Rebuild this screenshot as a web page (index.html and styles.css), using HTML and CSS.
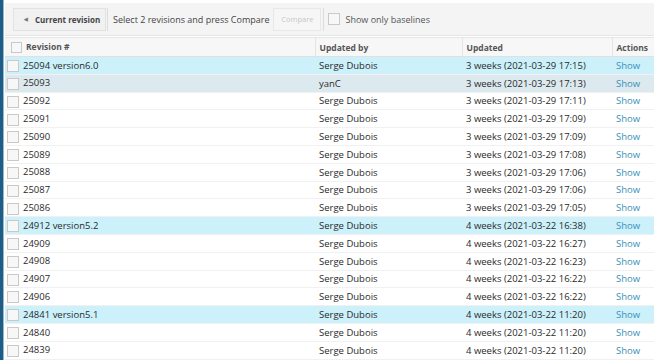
FILE: index.html
```html
<!DOCTYPE html>
<html>
<head>
<meta charset="utf-8">
<link rel="stylesheet" href="styles.css">
</head>
<body>
<div class="page">
  <div class="rail"></div>
  <div class="main">
    <div class="toolbar">
      <div class="group">
        <button class="btn current"><span class="caret">&#9664;</span>Current revision</button>
        <span class="hint">Select 2 revisions and press Compare</span>
        <button class="btn disabled">Compare</button>
      </div>
      <label class="baseline"><span class="cb"></span>Show only baselines</label>
    </div>
    <table class="grid">
      <colgroup><col class="c1"><col class="c2"><col class="c3"><col class="c4"></colgroup>
      <thead>
        <tr><th><span class="cb hcb"></span>Revision #</th><th>Updated by</th><th>Updated</th><th>Actions</th></tr>
      </thead>
      <tbody>
        <tr class="hl"><td><span class="cb"></span>25094 version6.0</td><td>Serge Dubois</td><td>3 weeks (2021-03-29 17:15)</td><td><a>Show</a></td></tr>
        <tr class="sel"><td><span class="cb"></span>25093</td><td>yanC</td><td>3 weeks (2021-03-29 17:13)</td><td><a>Show</a></td></tr>
        <tr><td><span class="cb"></span>25092</td><td>Serge Dubois</td><td>3 weeks (2021-03-29 17:11)</td><td><a>Show</a></td></tr>
        <tr><td><span class="cb"></span>25091</td><td>Serge Dubois</td><td>3 weeks (2021-03-29 17:09)</td><td><a>Show</a></td></tr>
        <tr><td><span class="cb"></span>25090</td><td>Serge Dubois</td><td>3 weeks (2021-03-29 17:09)</td><td><a>Show</a></td></tr>
        <tr><td><span class="cb"></span>25089</td><td>Serge Dubois</td><td>3 weeks (2021-03-29 17:08)</td><td><a>Show</a></td></tr>
        <tr><td><span class="cb"></span>25088</td><td>Serge Dubois</td><td>3 weeks (2021-03-29 17:06)</td><td><a>Show</a></td></tr>
        <tr><td><span class="cb"></span>25087</td><td>Serge Dubois</td><td>3 weeks (2021-03-29 17:06)</td><td><a>Show</a></td></tr>
        <tr><td><span class="cb"></span>25086</td><td>Serge Dubois</td><td>3 weeks (2021-03-29 17:05)</td><td><a>Show</a></td></tr>
        <tr class="hl"><td><span class="cb"></span>24912 version5.2</td><td>Serge Dubois</td><td>4 weeks (2021-03-22 16:38)</td><td><a>Show</a></td></tr>
        <tr><td><span class="cb"></span>24909</td><td>Serge Dubois</td><td>4 weeks (2021-03-22 16:27)</td><td><a>Show</a></td></tr>
        <tr><td><span class="cb"></span>24908</td><td>Serge Dubois</td><td>4 weeks (2021-03-22 16:23)</td><td><a>Show</a></td></tr>
        <tr><td><span class="cb"></span>24907</td><td>Serge Dubois</td><td>4 weeks (2021-03-22 16:22)</td><td><a>Show</a></td></tr>
        <tr><td><span class="cb"></span>24906</td><td>Serge Dubois</td><td>4 weeks (2021-03-22 16:22)</td><td><a>Show</a></td></tr>
        <tr class="hl"><td><span class="cb"></span>24841 version5.1</td><td>Serge Dubois</td><td>4 weeks (2021-03-22 11:20)</td><td><a>Show</a></td></tr>
        <tr><td><span class="cb"></span>24840</td><td>Serge Dubois</td><td>4 weeks (2021-03-22 11:20)</td><td><a>Show</a></td></tr>
        <tr><td><span class="cb"></span>24839</td><td>Serge Dubois</td><td>4 weeks (2021-03-22 11:20)</td><td><a>Show</a></td></tr>
      </tbody>
    </table>
  </div>
</div>
</body>
</html>
```
FILE: styles.css
```css
* { box-sizing: border-box; }
html, body { margin: 0; padding: 0; background: #fff; }
body { font-family: "Open Sans", "Noto Sans", sans-serif; font-size: 9.5px; color: #2a2a2a; width: 654px; height: 360px; overflow: hidden; }
.page { display: flex; height: 360px; }
.rail { width: 4px; flex: none; background: #1d5e88; border-right: 1px solid #9fb5c4; }
.main { flex: 1; min-width: 0; padding-left: 1px; }
.toolbar { margin-top: 3px; height: 33px; background: #f4f4f4; border-bottom: 1px solid #e4e4e4; display: flex; align-items: center; padding-left: 8px; }
.group { display: flex; align-items: center; height: 23px; border-right: 1px solid #dcdcdc; padding-right: 2px; }
.btn { font-family: inherit; font-size: 8.5px; height: 23px; border: 1px solid #e2e2e2; background: #f1f1f1; padding: 0 6px; color: #444; cursor: default; white-space: nowrap; }
.current { font-weight: bold; width: 93px; display: flex; align-items: center; padding-left: 10px; font-size: 8px; }
.caret { font-size: 5px; color: #777; margin-right: 7px; }
.hint { height: 23px; line-height: 23px; border-left: 1px solid #dcdcdc; padding: 0 4px 0 5px; margin-left: 1px; font-size: 9px; color: #444; white-space: nowrap; }
.disabled { color: #c8c8c8; background: #f6f6f6; border-color: #e8e8e8; width: 48px; padding: 0; text-align: center; font-size: 7.5px; }
.baseline { display: flex; align-items: center; margin-left: 4px; color: #555; font-size: 9px; white-space: nowrap; }
.cb { display: inline-block; width: 12px; height: 12px; border: 1px solid #c9c9c9; background: #f7f7f7; vertical-align: middle; margin-right: 4px; flex: none; }
.baseline .cb { margin-right: 5px; }
.grid { border-collapse: collapse; table-layout: fixed; width: 660px; margin-top: 1px; }
.c1 { width: 310px; } .c2 { width: 147px; } .c3 { width: 150px; } .c4 { width: 53px; }
th { height: 19px; background: #f7f7f7; border-top: 1px solid #e6e6e6; border-bottom: 1px solid #e0e0e0; border-left: 1px solid #e4e4e4; text-align: left; font-weight: bold; font-size: 8.5px; color: #555; padding: 0 4px; white-space: nowrap; }
th:first-child { border-left: none; padding-left: 6px; }
.hcb { width: 11px; height: 11px; margin-right: 4px; }
td { height: 17.8px; padding: 0 4px; white-space: nowrap; border-bottom: 1px solid #f1f1f1; font-size: 9.5px; }
td:first-child { padding-left: 2px; }
tr.hl td { background: #ccf1fb; }
tr.sel td { background: #dce9ef; }
a { color: #3a90b6; }
```
